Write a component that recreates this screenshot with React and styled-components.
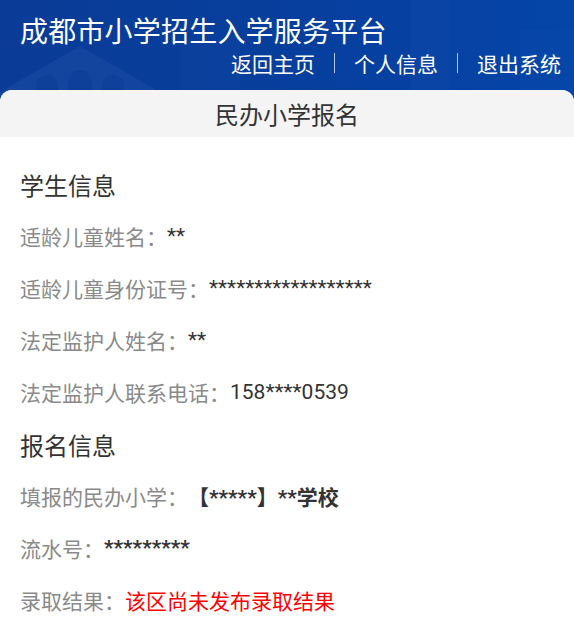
import React from 'react';
import styled, { createGlobalStyle } from 'styled-components';

const GlobalStyle = createGlobalStyle`
  html, body {
    margin: 0;
    padding: 0;
    background: #ffffff;
  }
  body {
    font-family: Roboto, "Noto Sans CJK SC", sans-serif;
    color: #333;
  }
`;

// ------------------------------
// 顶部 Header
// ------------------------------

const Header = styled.header`
  position: relative;
  overflow: hidden;
  height: 102px;
  background: linear-gradient(90deg, #0a3c97 0%, #073f9e 55%, #0445a8 100%);
`;

const HeaderArt = styled.svg`
  position: absolute;
  left: 0;
  top: 0;
  width: 574px;
  height: 102px;
`;

const HeaderInner = styled.div`
  position: relative;
  display: flex;
  flex-direction: column;
  padding: 11px 13px 0 20px;
`;

const SiteTitle = styled.h1`
  margin: 0;
  font-family: "Noto Sans CJK SC", sans-serif;
  font-size: 28px;
  font-weight: 400;
  line-height: 38px;
  color: #fff;
  letter-spacing: 0.2px;
`;

const Nav = styled.nav`
  display: flex;
  justify-content: flex-end;
  align-items: center;
  height: 28px;
`;

const NavLink = styled.a`
  font-family: "Noto Sans CJK SC", sans-serif;
  font-size: 21px;
  color: #fff;
  text-decoration: none;
  line-height: 28px;
`;

const NavSep = styled.span`
  display: inline-block;
  width: 1px;
  height: 20px;
  margin: 0 19px;
  background: rgba(255, 255, 255, 0.7);
`;

// ------------------------------
// 卡片 Card
// ------------------------------

const Card = styled.main`
  position: relative;
  margin-top: -12px;
  background: #fff;
  border-radius: 12px 12px 0 0;
  overflow: hidden;
`;

const CardTitle = styled.div`
  height: 47px;
  background: #f4f4f4;
  display: flex;
  align-items: center;
  justify-content: center;
  font-family: "Noto Sans CJK SC", sans-serif;
  font-size: 24px;
  color: #333;
`;

const Body = styled.div`
  padding: 21px 20px 20px 20px;
`;

const SectionTitle = styled.h2`
  margin: 0;
  height: 52px;
  display: flex;
  align-items: center;
  font-family: "Noto Sans CJK SC", sans-serif;
  font-size: 24px;
  font-weight: 400;
  color: #333;
`;

const Row = styled.div`
  display: flex;
  align-items: center;
  height: 52px;
  font-size: 21px;
`;

const Label = styled.span`
  font-family: "Noto Sans CJK SC", sans-serif;
  color: #8a8a8a;
`;

const Value = styled.span`
  color: ${props => (props.$danger ? '#ff0000' : '#333')};
  font-weight: ${props => (props.$bold ? 700 : 400)};
  font-family: ${props => (props.$cjk ? '"Noto Sans CJK SC", sans-serif' : 'Roboto, "Noto Sans CJK SC", sans-serif')};
`;

const studentRows = [
  { label: '适龄儿童姓名：', value: '**' },
  { label: '适龄儿童身份证号：', value: '******************' },
  { label: '法定监护人姓名：', value: '**' },
  { label: '法定监护人联系电话：', value: '158****0539' },
];

export default function App() {
  return (
    <>
      <GlobalStyle />
      <Header>
        <HeaderArt viewBox="0 0 574 102" aria-hidden="true">
          <path d="M-10 98 L80 46 L170 98 Z" fill="#2a5aae" opacity="0.3" />
          <path d="M36 102 V86 a11 11 0 0 1 22 0 V102 Z" fill="#0a3c97" opacity="0.5" />
          <path d="M68 102 V82 a12 12 0 0 1 24 0 V102 Z" fill="#0a3c97" opacity="0.5" />
          <path d="M102 102 V86 a11 11 0 0 1 22 0 V102 Z" fill="#0a3c97" opacity="0.5" />
          <rect x="180" y="40" width="60" height="62" fill="#2a5aae" opacity="0.1" />
          <rect x="410" y="0" width="40" height="102" fill="#3a6ac0" opacity="0.08" />
          <rect x="520" y="30" width="54" height="72" fill="#3a6ac0" opacity="0.06" />
        </HeaderArt>
        <HeaderInner>
          <SiteTitle>成都市小学招生入学服务平台</SiteTitle>
          <Nav>
            <NavLink href="#">返回主页</NavLink>
            <NavSep />
            <NavLink href="#">个人信息</NavLink>
            <NavSep />
            <NavLink href="#">退出系统</NavLink>
          </Nav>
        </HeaderInner>
      </Header>

      <Card>
        <CardTitle>民办小学报名</CardTitle>
        <Body>
          <SectionTitle>学生信息</SectionTitle>
          {studentRows.map(row => (
            <Row key={row.label}>
              <Label>{row.label}</Label>
              <Value>{row.value}</Value>
            </Row>
          ))}

          <SectionTitle>报名信息</SectionTitle>
          <Row>
            <Label>填报的民办小学：</Label>
            <Value $bold>【*****】**学校</Value>
          </Row>
          <Row>
            <Label>流水号：</Label>
            <Value $bold>*********</Value>
          </Row>
          <Row>
            <Label>录取结果：</Label>
            <Value $danger $cjk>该区尚未发布录取结果</Value>
          </Row>
        </Body>
      </Card>
    </>
  );
}
